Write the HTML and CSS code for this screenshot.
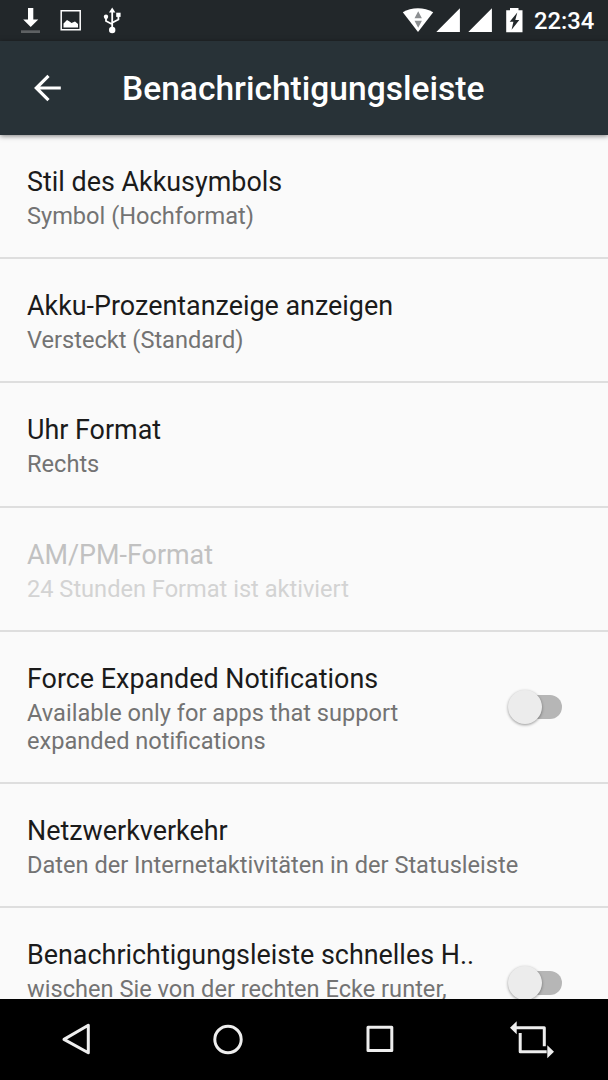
FILE: index.html
```
<!DOCTYPE html>

<html lang="de">
<head>

<title>Benachrichtigungsleiste</title>
<meta charset="utf-8">

<link rel="stylesheet" href="styles.css">

</head>
<body>

<div class="screen">

	<div class="status">
		<svg class="left-icons" width="130" height="40" viewBox="0 0 130 40">
			<path fill="#fff" d="M28 8h5.300v11.500h5L30.700 27l-7.500-7.500H28z"/>
			<path fill="#5e6163" d="M21 30.300h19v2.700H21z"/>
			<path fill="none" stroke="#fff" stroke-width="1.500" d="M61.200 10.700h19v19h-19z"/>
			<path fill="#fff" d="M63.500 27.500v-4l3.500-3.500 2.500 1.500 2 1.500 3.500-1.500 3 2.500v3.500z"/>
			<g fill="#fff">
				<path d="M112.200 7.500l3.200 5h-6.400z"/>
				<circle cx="112.200" cy="30" r="3.200"/>
				<circle cx="106" cy="16.700" r="2.200"/>
				<path d="M116.200 12.700h4.400v4.200h-4.400z"/>
			</g>
			<path fill="none" stroke="#fff" stroke-width="1.800" d="M112.200 12v17M106 17v4l6.200 3.300M118.400 16v3.500l-6.200 3.200"/>
		</svg>
		<svg class="right-icons" width="125" height="40" viewBox="400 0 125 40">
			<path fill="#fff" d="M402.800 12.300c8.500-5.500 21.500-5.500 30.400 0L418 32z"/>
			<path fill="#8c8f91" d="M418.200 11.300l3.700 7h-7.400zM418.200 27.800l3.700-7h-7.400z"/>
			<path fill="#fff" d="M459.900 8.300V32h-23.600zM491.900 8.300V32h-23.600z"/>
			<path fill="#fff" d="M510 8h8.500v2.300h4V32.300h-16.300v-22h3.800z"/>
			<path fill="#22272a" d="M517.300 12.500l-7.600 9.300h3.700l-1.800 8 7.700-9.800h-4z"/>
		</svg>
		<span class="clock">22:34</span>
	</div>

	<div class="toolbar">
		<svg width="30" height="30" viewBox="0 0 30 30">
			<path fill="none" stroke="#fff" stroke-width="3.200" d="M29.800 15H5M17.500 2.800L5.300 15l12.200 12.200"/>
		</svg>
		<h1>Benachrichtigungsleiste</h1>
	</div>

	<ul class="prefs">
		<li>
			<div class="text">
				<div class="title">Stil des Akkusymbols</div>
				<div class="summary">Symbol (Hochformat)</div>
			</div>
		</li>
		<li>
			<div class="text">
				<div class="title">Akku-Prozentanzeige anzeigen</div>
				<div class="summary">Versteckt (Standard)</div>
			</div>
		</li>
		<li>
			<div class="text">
				<div class="title">Uhr Format</div>
				<div class="summary">Rechts</div>
			</div>
		</li>
		<li class="disabled">
			<div class="text">
				<div class="title">AM/PM-Format</div>
				<div class="summary">24 Stunden Format ist aktiviert</div>
			</div>
		</li>
		<li>
			<div class="text">
				<div class="title">Force Expanded Notifications</div>
				<div class="summary">Available only for apps that support<br>expanded notifications</div>
			</div>
			<div class="switch"><span class="thumb"></span></div>
		</li>
		<li>
			<div class="text">
				<div class="title">Netzwerkverkehr</div>
				<div class="summary">Daten der Internetaktivitäten in der Statusleiste</div>
			</div>
		</li>
		<li>
			<div class="text">
				<div class="title">Benachrichtigungsleiste schnelles H..</div>
				<div class="summary">wischen Sie von der rechten Ecke runter,<br>&nbsp;</div>
			</div>
			<div class="switch"><span class="thumb"></span></div>
		</li>
	</ul>

	<div class="navbar">
		<svg width="152" height="81" viewBox="0 0 152 81"><path d="M88.300 26.200v27.600L64 40.400z"/></svg>
		<svg width="152" height="81" viewBox="0 0 152 81"><circle cx="76" cy="40.500" r="13.200"/></svg>
		<svg width="152" height="81" viewBox="0 0 152 81"><path d="M64 28.300h23.800v23.200H64z"/></svg>
		<svg width="152" height="81" viewBox="0 0 152 81">
			<path d="M59 28.800h29.300v18.500M64.200 34v18.700h26.500"/>
			<path class="tip" d="M54 28.800l6.700-6.500v13zM98 52.700l-6.700-6.500v13z"/>
		</svg>
	</div>

</div>

</body>
</html>
```
FILE: styles.css
```
body {
	margin: 0;
	font-family: Roboto, sans-serif;
	background: #fafafa;
}

.screen {
	display: flex;
	flex-direction: column;
	width: 608px;
	height: 1080px;
	overflow: hidden;
}

.status {
	display: flex;
	flex: none;
	height: 41px;
	background: #22272a;
	color: #fff;
}

.right-icons {
	margin-left: auto;
}

.clock {
	width: 74px;
	margin-left: 9px;
	line-height: 42px;
	font-size: 23.8px;
	font-weight: 500;
}

.toolbar {
	display: flex;
	flex: none;
	align-items: center;
	height: 94px;
	padding-left: 31px;
	background: #283237;
	color: #fff;
	z-index: 1;
	box-shadow: 0 1px 5px rgba(0, 0, 0, 0.5);
}

.toolbar h1 {
	margin: 1px 0 0 61px;
	font-size: 33.55px;
	font-weight: 500;
}

/* preference list, the last row runs under the navigation bar */
.prefs {
	flex: 1;
	min-height: 0;
	margin: 0;
	padding: 0;
	overflow: hidden;
	list-style-type: none;
}

.prefs li {
	display: flex;
	align-items: center;
	justify-content: space-between;
	padding: 0 46px 0 27px;
	border-bottom: 2px solid #dedede;
}

.text {
	padding: 31.8px 0 26.6px;
	white-space: nowrap;
}

.title {
	font-size: 26.9px;
	line-height: 31.7px;
	color: #1b1b1b;
}

.summary {
	margin-top: 4.4px;
	font-size: 23.6px;
	line-height: 27.75px;
	color: #737373;
}

.disabled .title {
	color: #c1c1c1;
}

.disabled .summary {
	color: #d3d3d3;
}

.switch {
	display: flex;
	align-items: center;
	width: 44px;
	height: 24px;
	border-radius: 12px;
	background: #b6b6b6;
}

.thumb {
	width: 34px;
	height: 34px;
	margin-left: -10px;
	border-radius: 50%;
	background: #ececec;
	box-shadow: 0 1px 3px rgba(0, 0, 0, 0.4);
}

.navbar {
	display: flex;
	flex: none;
	height: 81px;
	background: #000;
}

.navbar svg {
	fill: none;
	stroke: #eee;
	stroke-width: 3;
	stroke-linejoin: round;
}

.navbar .tip {
	fill: #eee;
	stroke: none;
}
```
